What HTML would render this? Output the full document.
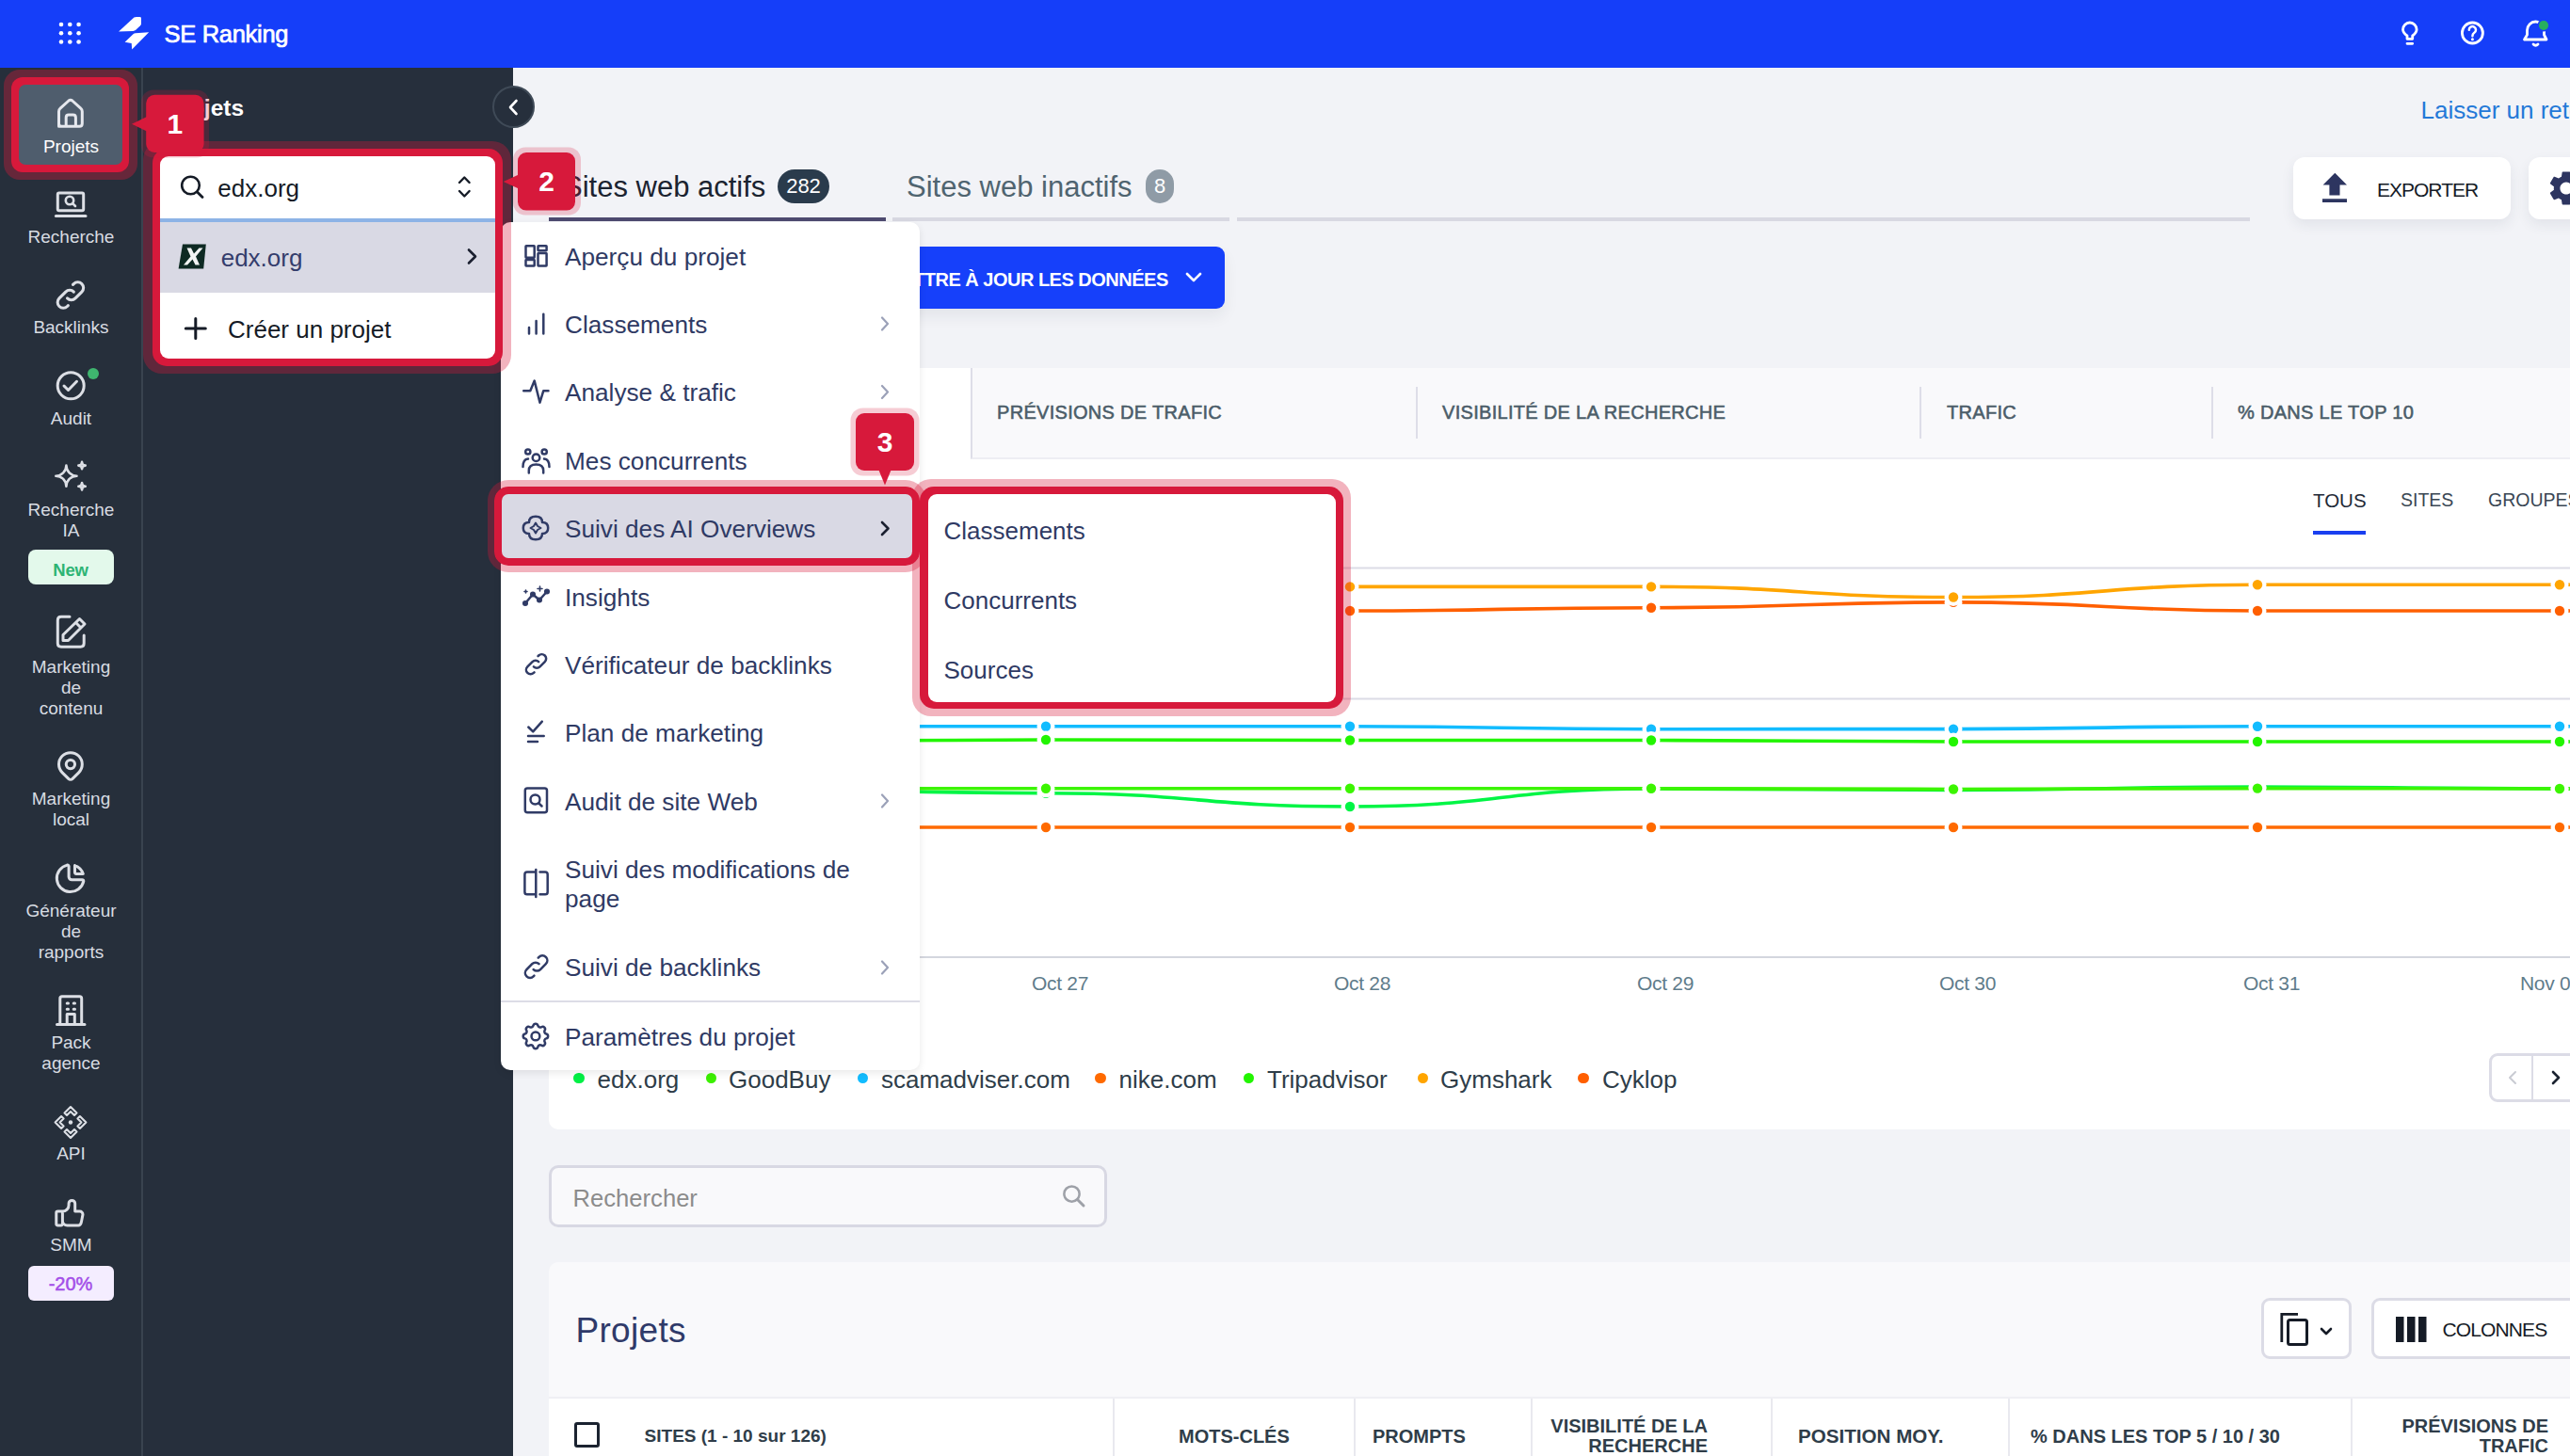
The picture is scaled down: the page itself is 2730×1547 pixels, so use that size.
<!DOCTYPE html>
<html><head><meta charset="utf-8">
<style>
*{box-sizing:border-box;margin:0;padding:0}
html,body{width:2730px;height:1547px;overflow:hidden;background:#f2f3f7;font-family:"Liberation Sans",sans-serif}
.a{position:absolute}
.t{position:absolute;white-space:nowrap;line-height:1}
svg{position:absolute;overflow:visible}
.m{top:428px;font-size:20px;font-weight:400;color:#4b5d69;letter-spacing:0.3px;-webkit-text-stroke:0.55px #4b5d69}
.th{font-size:20px;font-weight:700;color:#2f3d49;white-space:nowrap}
.mi{left:600px;font-size:26.2px;color:#2f3a64}
.sm{left:1002.5px;font-size:26px;color:#2f3a64}
.bn{font-size:30px;font-weight:700;color:#fff;text-align:center}
.sl{position:absolute;left:0;width:151px;text-align:center;font-size:19px;line-height:22px;color:#d8dce2}
</style></head><body>

<!-- TOP BAR -->
<div class="a" style="left:0;top:0;width:2730px;height:72px;background:#153ef9"></div>
<svg style="left:0;top:0" width="2730" height="72" viewBox="0 0 2730 72">
 <g fill="#fff">
  <circle cx="65" cy="26" r="2.3"/><circle cx="74.3" cy="26" r="2.3"/><circle cx="83.6" cy="26" r="2.3"/>
  <circle cx="65" cy="35.3" r="2.3"/><circle cx="74.3" cy="35.3" r="2.3"/><circle cx="83.6" cy="35.3" r="2.3"/>
  <circle cx="65" cy="44.5" r="2.3"/><circle cx="74.3" cy="44.5" r="2.3"/><circle cx="83.6" cy="44.5" r="2.3"/>
  <path d="M126.1 33.5 L142.4 18.6 Q143.6 17.9 145 17.9 L148.9 17.9 Q150 18 150 19.5 L150 25.5 Q150 26.3 149 27.3 L144 32 Q143 32.8 141.5 32.9 Z"/>
  <path d="M132.6 44.8 L141.5 36.3 Q142.5 35.4 144 35.2 L158.2 34.2 L140.2 52.4 L139.7 45.9 Z"/>
 </g>
</svg>
<div class="t" style="left:174.5px;top:24px;font-size:25.5px;font-weight:400;letter-spacing:-0.3px;-webkit-text-stroke:0.7px #fff;color:#fff">SE Ranking</div>

<svg style="left:0;top:0" width="2730" height="72" fill="none" stroke="#fff" stroke-width="2.8" stroke-linecap="round" stroke-linejoin="round">
  <path d="M2557 41.3 V38 Q2552.5 35 2552.5 31.3 A7.3 7.3 0 0 1 2567.1 31.3 Q2567.1 35 2562.7 38 V41.3 Z M2557 46.3 H2562.7"/>
  <circle cx="2626.4" cy="35" r="11"/>
  <path d="M2622.8 31.8 A3.6 3.6 0 1 1 2628.3 34.8 Q2626.4 36 2626.4 38.3" stroke-width="2.5"/>
  <circle cx="2626.4" cy="41.8" r="1.5" fill="#fff" stroke="none"/>
  <path d="M2681.5 42 H2705 L2702.5 37 V32 A9 9 0 0 0 2684.5 32 V37 Z M2691 47 Q2693.5 49.5 2696 47"/>
</svg>
<div class="a" style="left:2697px;top:22px;width:9.5px;height:9.5px;border-radius:50%;background:#27ae60;box-shadow:0 0 0 1.5px #153ef9"></div>

<!-- LEFT SIDEBAR -->
<div class="a" style="left:0;top:72px;width:151px;height:1475px;background:#262f3b"></div>
<div class="a" style="left:150px;top:72px;width:2px;height:1475px;background:#39434f"></div>

<!-- sidebar active -->
<div class="a" style="left:4px;top:74px;width:142px;height:117px;border-radius:17px;background:rgba(215,25,59,0.36)"></div>
<div class="a" style="left:12px;top:82px;width:125px;height:101px;border-radius:12px;background:#d7193b"></div>
<div class="a" style="left:20px;top:90px;width:110px;height:85px;border-radius:7px;background:#4f5d6d"></div>
<svg style="left:0;top:0" width="151" height="1547" viewBox="0 0 151 1547" fill="none" stroke="#dcdfe5" stroke-width="3" stroke-linecap="round" stroke-linejoin="round">
 <!-- home -->
 <path stroke="#e6e8ee" d="M62.5 134.2 V118.5 Q62.5 116.5 64 115.2 L73 107 Q74.9 105.5 76.8 107 L85.8 115.2 Q87.3 116.5 87.3 118.5 V131.2 Q87.3 134.2 84.3 134.2 H65.5 Q62.5 134.2 62.5 131.2 Z M70.2 134.2 V125 Q70.2 122.1 73 122.1 H77.6 Q80.4 122.1 80.4 125 V134.2"/>
 <!-- recherche monitor -->
 <rect x="61.3" y="205" width="27.4" height="18.7" rx="1.5"/>
 <path d="M59.4 229.4 H91"/>
 <circle cx="74" cy="213" r="4.2" stroke-width="2.6"/><path d="M77.2 216.2 L80 219" stroke-width="2.6"/>
 <!-- link -->
 <g transform="translate(54.4,293) scale(1.71)" stroke-width="1.8"><path d="M10 14a3.5 3.5 0 0 0 5 0l4 -4a3.5 3.5 0 0 0 -5 -5l-.5 .5"/><path d="M14 10a3.5 3.5 0 0 0 -5 0l-4 4a3.5 3.5 0 0 0 5 5l.5 -.5"/></g>
 <!-- audit -->
 <circle cx="75.2" cy="409.8" r="14"/><path d="M68 410 L72.5 414.5 L81.5 405.3"/>
 <!-- sparkles -->
 <g transform="translate(53.75,483.5) scale(1.85)" stroke-width="1.4"><path d="M16 18a2 2 0 0 1 2 2a2 2 0 0 1 2 -2a2 2 0 0 1 -2 -2a2 2 0 0 1 -2 2zm0 -12a2 2 0 0 1 2 2a2 2 0 0 1 2 -2a2 2 0 0 1 -2 -2a2 2 0 0 1 -2 2zm-7 12a6 6 0 0 1 6 -6a6 6 0 0 1 -6 -6a6 6 0 0 1 -6 6a6 6 0 0 1 6 6z"/></g>
 <!-- edit -->
 <path d="M74 655.3 H65 Q61.3 655.3 61.3 659 V683.5 Q61.3 687.2 65 687.2 H85.5 Q89.2 687.2 89.2 683.5 V675"/>
 <path d="M67 674.5 L84.5 657.5 L90 663 L72.5 680.5 H67 Z M80.5 661.5 L86 667"/>
 <!-- pin -->
 <g transform="translate(56.3,795) scale(1.55)" stroke-width="1.95"><path d="M9 11a3 3 0 1 0 6 0a3 3 0 0 0 -6 0"/><path d="M17.657 16.657l-4.243 4.243a2 2 0 0 1 -2.827 0l-4.244 -4.243a8 8 0 1 1 11.314 0z"/></g>
 <!-- pie -->
 <g transform="translate(55.5,914) scale(1.6)" stroke-width="1.9"><path d="M10 3.2a9 9 0 1 0 10.8 10.8a1 1 0 0 0 -1 -1h-6.8a2 2 0 0 1 -2 -2v-7a.9 .9 0 0 0 -1 -.8"/><path d="M15 3.5a9 9 0 0 1 5.5 5.5h-4.5a1 1 0 0 1 -1 -1v-4.5"/></g>
 <!-- building -->
 <path d="M60.5 1088.5 H90 M63.8 1088.5 V1061 Q63.8 1058.8 66 1058.8 H84.5 Q86.7 1058.8 86.7 1061 V1088.5 M71.2 1066 h1.3 M78.2 1066 h1.3 M71.2 1072.2 h1.3 M78.2 1072.2 h1.3 M71.2 1088.5 V1077.5 H79.3 V1088.5"/>
 <!-- api -->
 <g stroke-width="2.1"><path d="M75 1176 L81.5 1182.5 L79 1185 L75 1181 L71 1185 L68.5 1182.5 Z M75 1209 L81.5 1202.5 L79 1200 L75 1204 L71 1200 L68.5 1202.5 Z M58.6 1192.5 L65.1 1186 L67.6 1188.5 L63.6 1192.5 L67.6 1196.5 L65.1 1199 Z M91.4 1192.5 L84.9 1186 L82.4 1188.5 L86.4 1192.5 L82.4 1196.5 L84.9 1199 Z"/></g>
 <circle cx="75" cy="1192.5" r="2.2" fill="#dcdfe5" stroke="none"/>
 <!-- thumb -->
 <g transform="translate(54.8,1268.8) scale(1.66)" stroke-width="1.8"><path d="M7 11v8a1 1 0 0 1 -1 1h-2a1 1 0 0 1 -1 -1v-7a1 1 0 0 1 1 -1h3a4 4 0 0 0 4 -4v-1a2 2 0 0 1 4 0v5h3a2 2 0 0 1 2 2l-1 5a2 3 0 0 1 -2 2h-7a3 3 0 0 1 -3 -3"/></g>
</svg>
<div class="a" style="left:93px;top:391px;width:12px;height:12px;border-radius:50%;background:#3fb56f"></div>
<div class="sl" style="top:144.5px;color:#fff">Projets</div>
<div class="sl" style="top:241px">Recherche</div>
<div class="sl" style="top:337px">Backlinks</div>
<div class="sl" style="top:434px">Audit</div>
<div class="sl" style="top:530.5px">Recherche<br>IA</div>
<div class="a" style="left:29.5px;top:584px;width:91px;height:37px;border-radius:8px;background:#e3f9eb"></div><div class="t" style="left:29.5px;width:91px;text-align:center;top:596.5px;font-size:18.5px;font-weight:700;letter-spacing:-0.2px;color:#2db474">New</div>
<div class="sl" style="top:697.5px">Marketing<br>de<br>contenu</div>
<div class="sl" style="top:838px">Marketing<br>local</div>
<div class="sl" style="top:957px">Générateur<br>de<br>rapports</div>
<div class="sl" style="top:1097px">Pack<br>agence</div>
<div class="sl" style="top:1215px">API</div>
<div class="sl" style="top:1312px">SMM</div>
<div class="a" style="left:29.5px;top:1345px;width:91px;height:37px;border-radius:6px;background:#f4edff;color:#a34ee8;font-size:20px;font-weight:400;-webkit-text-stroke:0.5px #a34ee8;text-align:center;line-height:38px">-20%</div>

<!-- PROJECT PANEL -->
<div class="a" style="left:152px;top:72px;width:393px;height:1475px;background:#262f3c"></div>


<!-- MAIN CONTENT -->
<div class="t" style="left:2571.5px;top:104px;font-size:26px;color:#2479d8">Laisser un retour</div>
<!-- tabs -->
<div class="t" style="left:598px;top:183px;font-size:31px;color:#1b2330">Sites web actifs</div>
<div class="a" style="left:826px;top:180px;width:55px;height:36px;border-radius:18px;background:#2a3b4c;color:#fff;font-size:22px;line-height:36px;text-align:center">282</div>
<div class="t" style="left:963px;top:183px;font-size:31px;color:#4f6470">Sites web inactifs</div>
<div class="a" style="left:1217px;top:180px;width:30px;height:36px;border-radius:15px;background:#8f9ba6;color:#fff;font-size:22px;line-height:36px;text-align:center">8</div>
<div class="a" style="left:583px;top:231px;width:358px;height:4px;background:#4e4a70"></div>
<div class="a" style="left:948px;top:231px;width:358px;height:4px;background:#d8d8e2"></div>
<div class="a" style="left:1314px;top:231px;width:1076px;height:4px;background:#d8d8e2"></div>
<!-- export -->
<div class="a" style="left:2436px;top:167px;width:231px;height:66px;border-radius:12px;background:#fff;box-shadow:0 6px 14px rgba(40,50,80,0.08)"></div>
<svg style="left:0;top:0" width="2730" height="300">
 <path fill="#2d3560" d="M2480.3 183.8 L2493 196.4 H2485.5 V207.6 H2474.4 V196.4 H2467.6 Z M2467 211.3 H2493 V215 H2467 Z"/>
</svg>
<div class="t" style="left:2525px;top:190.5px;font-size:21px;letter-spacing:-1px;color:#151b26">EXPORTER</div>
<div class="a" style="left:2686px;top:167px;width:120px;height:66px;border-radius:12px;background:#fff;box-shadow:0 6px 14px rgba(40,50,80,0.08)"></div>
<svg style="left:2704px;top:178px" width="44" height="44" viewBox="0 0 24 24"><path fill="#2d3560" d="M19.14 12.94c.04-.3.06-.61.06-.94 0-.32-.02-.64-.07-.94l2.03-1.58c.18-.14.23-.41.12-.61l-1.92-3.32c-.12-.22-.37-.29-.59-.22l-2.39.96c-.5-.38-1.03-.7-1.62-.94l-.36-2.54c-.04-.24-.24-.41-.48-.41h-3.84c-.24 0-.43.17-.47.41l-.36 2.54c-.59.24-1.13.57-1.62.94l-2.39-.96c-.22-.08-.47 0-.59.22L2.74 8.87c-.12.21-.08.47.12.61l2.03 1.58c-.05.3-.09.63-.09.94s.02.64.07.94l-2.03 1.58c-.18.14-.23.41-.12.61l1.92 3.32c.12.22.37.29.59.22l2.39-.96c.5.38 1.03.7 1.62.94l.36 2.54c.05.24.24.41.48.41h3.84c.24 0 .44-.17.47-.41l.36-2.54c.59-.24 1.13-.56 1.62-.94l2.39.96c.22.08.47 0 .59-.22l1.92-3.32c.12-.22.07-.47-.12-.61l-2.01-1.58zM12 15.6c-1.98 0-3.6-1.62-3.6-3.6s1.62-3.6 3.6-3.6 3.6 1.62 3.6 3.6-1.62 3.6-3.6 3.6z"/></svg>
<!-- blue update button -->
<div class="a" style="left:700px;top:261.5px;width:601px;height:66px;border-radius:9px;background:#1640fa;box-shadow:0 8px 16px rgba(30,40,60,0.07)"></div>
<div class="t" style="left:941px;top:287px;font-size:20px;font-weight:700;letter-spacing:-0.5px;color:#fff">METTRE À JOUR LES DONNÉES</div>
<svg style="left:1258px;top:288px" width="20" height="14"><path d="M3 3 L10 10 L17 3" fill="none" stroke="#fff" stroke-width="2.6" stroke-linecap="round" stroke-linejoin="round"/></svg>

<!-- chart card -->
<div class="a" style="left:583px;top:391px;width:2200px;height:809px;border-radius:10px;background:#fff"></div>
<div class="a" style="left:1031px;top:391px;width:1750px;height:97px;background:#f9f9fb;border-left:2px solid #dedee8;border-bottom:2px solid #eeeef3"></div>
<div class="a" style="left:1504px;top:411px;width:2px;height:55px;background:#dedee8"></div>
<div class="a" style="left:2039px;top:411px;width:2px;height:55px;background:#dedee8"></div>
<div class="a" style="left:2349px;top:411px;width:2px;height:55px;background:#dedee8"></div>
<div class="t m" style="left:1059px">PRÉVISIONS DE TRAFIC</div>
<div class="t m" style="left:1532px">VISIBILITÉ DE LA RECHERCHE</div>
<div class="t m" style="left:2068px">TRAFIC</div>
<div class="t m" style="left:2377px">% DANS LE TOP 10</div>
<div class="t" style="left:2457px;top:522px;font-size:20.5px;color:#1f2937">TOUS</div>
<div class="t" style="left:2550px;top:522px;font-size:19.5px;color:#3a4754">SITES</div>
<div class="t" style="left:2643px;top:522px;font-size:19.5px;color:#3a4754">GROUPES</div>
<div class="a" style="left:2457px;top:564px;width:56px;height:4px;background:#1a3ff0"></div>

<svg style="left:0;top:0" width="2730" height="1100" viewBox="0 0 2730 1100">
<g stroke="#dcdce6" stroke-width="2"><path d="M583 603.5 H2730 M583 742.5 H2730"/></g>
<path d="M583 1017 H2730" stroke="#d4d6de" stroke-width="2"/>
<path d="M789 649 C950.0 649 950.0 649 1111 649 C1272.5 649 1272.5 649 1434 649 C1594.0 649 1594.0 645.7 1754 645.7 C1914.5 645.7 1914.5 639.9 2075 639.9 C2236.5 639.9 2236.5 649 2398 649 C2558.5 649 2558.5 649 2719 649 C2879.5 649 2879.5 649 3040 649" fill="none" stroke="#ff5f00" stroke-width="3.6"/>
<path d="M789 623 C950.0 623 950.0 623 1111 623 C1272.5 623 1272.5 623.4 1434 623.4 C1594.0 623.4 1594.0 623.4 1754 623.4 C1914.5 623.4 1914.5 634.5 2075 634.5 C2236.5 634.5 2236.5 621.3 2398 621.3 C2558.5 621.3 2558.5 621.3 2719 621.3 C2879.5 621.3 2879.5 621.3 3040 621.3" fill="none" stroke="#ffa500" stroke-width="3.6"/>
<path d="M789 771.8 C950.0 771.8 950.0 771.8 1111 771.8 C1272.5 771.8 1272.5 771.8 1434 771.8 C1594.0 771.8 1594.0 774.7 1754 774.7 C1914.5 774.7 1914.5 774.6 2075 774.6 C2236.5 774.6 2236.5 771.7 2398 771.7 C2558.5 771.7 2558.5 771.7 2719 771.7 C2879.5 771.7 2879.5 771.7 3040 771.7" fill="none" stroke="#12bcff" stroke-width="3.6"/>
<path d="M789 787.5 C950.0 787.5 950.0 786 1111 786 C1272.5 786 1272.5 786.5 1434 786.5 C1594.0 786.5 1594.0 786.5 1754 786.5 C1914.5 786.5 1914.5 788 2075 788 C2236.5 788 2236.5 788 2398 788 C2558.5 788 2558.5 788 2719 788 C2879.5 788 2879.5 788 3040 788" fill="none" stroke="#22f500" stroke-width="3.6"/>
<path d="M789 838 C950.0 838 950.0 842.7 1111 842.7 C1272.5 842.7 1272.5 857 1434 857 C1594.0 857 1594.0 838 1754 838 C1914.5 838 1914.5 839.5 2075 839.5 C2236.5 839.5 2236.5 836 2398 836 C2558.5 836 2558.5 838 2719 838 C2879.5 838 2879.5 838 3040 838" fill="none" stroke="#00f545" stroke-width="3.6"/>
<path d="M789 837.8 C950.0 837.8 950.0 837.8 1111 837.8 C1272.5 837.8 1272.5 837.8 1434 837.8 C1594.0 837.8 1594.0 837.8 1754 837.8 C1914.5 837.8 1914.5 838.5 2075 838.5 C2236.5 838.5 2236.5 837.6 2398 837.6 C2558.5 837.6 2558.5 838 2719 838 C2879.5 838 2879.5 838 3040 838" fill="none" stroke="#3cf500" stroke-width="3.6"/>
<path d="M789 879 C950.0 879 950.0 879 1111 879 C1272.5 879 1272.5 879 1434 879 C1594.0 879 1594.0 879 1754 879 C1914.5 879 1914.5 879 2075 879 C2236.5 879 2236.5 879 2398 879 C2558.5 879 2558.5 879 2719 879 C2879.5 879 2879.5 879 3040 879" fill="none" stroke="#ff6a00" stroke-width="3.6"/>
<circle cx="789" cy="649" r="9.5" fill="#fff"/>
<circle cx="1111" cy="649" r="9.5" fill="#fff"/>
<circle cx="1434" cy="649" r="9.5" fill="#fff"/>
<circle cx="1754" cy="645.7" r="9.5" fill="#fff"/>
<circle cx="2075" cy="639.9" r="9.5" fill="#fff"/>
<circle cx="2398" cy="649" r="9.5" fill="#fff"/>
<circle cx="2719" cy="649" r="9.5" fill="#fff"/>
<circle cx="3040" cy="649" r="9.5" fill="#fff"/>
<circle cx="789" cy="649" r="5.2" fill="#ff5f00"/>
<circle cx="1111" cy="649" r="5.2" fill="#ff5f00"/>
<circle cx="1434" cy="649" r="5.2" fill="#ff5f00"/>
<circle cx="1754" cy="645.7" r="5.2" fill="#ff5f00"/>
<circle cx="2075" cy="639.9" r="5.2" fill="#ff5f00"/>
<circle cx="2398" cy="649" r="5.2" fill="#ff5f00"/>
<circle cx="2719" cy="649" r="5.2" fill="#ff5f00"/>
<circle cx="3040" cy="649" r="5.2" fill="#ff5f00"/>
<circle cx="789" cy="623" r="9.5" fill="#fff"/>
<circle cx="1111" cy="623" r="9.5" fill="#fff"/>
<circle cx="1434" cy="623.4" r="9.5" fill="#fff"/>
<circle cx="1754" cy="623.4" r="9.5" fill="#fff"/>
<circle cx="2075" cy="634.5" r="9.5" fill="#fff"/>
<circle cx="2398" cy="621.3" r="9.5" fill="#fff"/>
<circle cx="2719" cy="621.3" r="9.5" fill="#fff"/>
<circle cx="3040" cy="621.3" r="9.5" fill="#fff"/>
<circle cx="789" cy="623" r="5.2" fill="#ffa500"/>
<circle cx="1111" cy="623" r="5.2" fill="#ffa500"/>
<circle cx="1434" cy="623.4" r="5.2" fill="#ffa500"/>
<circle cx="1754" cy="623.4" r="5.2" fill="#ffa500"/>
<circle cx="2075" cy="634.5" r="5.2" fill="#ffa500"/>
<circle cx="2398" cy="621.3" r="5.2" fill="#ffa500"/>
<circle cx="2719" cy="621.3" r="5.2" fill="#ffa500"/>
<circle cx="3040" cy="621.3" r="5.2" fill="#ffa500"/>
<circle cx="789" cy="771.8" r="9.5" fill="#fff"/>
<circle cx="1111" cy="771.8" r="9.5" fill="#fff"/>
<circle cx="1434" cy="771.8" r="9.5" fill="#fff"/>
<circle cx="1754" cy="774.7" r="9.5" fill="#fff"/>
<circle cx="2075" cy="774.6" r="9.5" fill="#fff"/>
<circle cx="2398" cy="771.7" r="9.5" fill="#fff"/>
<circle cx="2719" cy="771.7" r="9.5" fill="#fff"/>
<circle cx="3040" cy="771.7" r="9.5" fill="#fff"/>
<circle cx="789" cy="771.8" r="5.2" fill="#12bcff"/>
<circle cx="1111" cy="771.8" r="5.2" fill="#12bcff"/>
<circle cx="1434" cy="771.8" r="5.2" fill="#12bcff"/>
<circle cx="1754" cy="774.7" r="5.2" fill="#12bcff"/>
<circle cx="2075" cy="774.6" r="5.2" fill="#12bcff"/>
<circle cx="2398" cy="771.7" r="5.2" fill="#12bcff"/>
<circle cx="2719" cy="771.7" r="5.2" fill="#12bcff"/>
<circle cx="3040" cy="771.7" r="5.2" fill="#12bcff"/>
<circle cx="789" cy="787.5" r="9.5" fill="#fff"/>
<circle cx="1111" cy="786" r="9.5" fill="#fff"/>
<circle cx="1434" cy="786.5" r="9.5" fill="#fff"/>
<circle cx="1754" cy="786.5" r="9.5" fill="#fff"/>
<circle cx="2075" cy="788" r="9.5" fill="#fff"/>
<circle cx="2398" cy="788" r="9.5" fill="#fff"/>
<circle cx="2719" cy="788" r="9.5" fill="#fff"/>
<circle cx="3040" cy="788" r="9.5" fill="#fff"/>
<circle cx="789" cy="787.5" r="5.2" fill="#22f500"/>
<circle cx="1111" cy="786" r="5.2" fill="#22f500"/>
<circle cx="1434" cy="786.5" r="5.2" fill="#22f500"/>
<circle cx="1754" cy="786.5" r="5.2" fill="#22f500"/>
<circle cx="2075" cy="788" r="5.2" fill="#22f500"/>
<circle cx="2398" cy="788" r="5.2" fill="#22f500"/>
<circle cx="2719" cy="788" r="5.2" fill="#22f500"/>
<circle cx="3040" cy="788" r="5.2" fill="#22f500"/>
<circle cx="789" cy="838" r="9.5" fill="#fff"/>
<circle cx="1111" cy="842.7" r="9.5" fill="#fff"/>
<circle cx="1434" cy="857" r="9.5" fill="#fff"/>
<circle cx="1754" cy="838" r="9.5" fill="#fff"/>
<circle cx="2075" cy="839.5" r="9.5" fill="#fff"/>
<circle cx="2398" cy="836" r="9.5" fill="#fff"/>
<circle cx="2719" cy="838" r="9.5" fill="#fff"/>
<circle cx="3040" cy="838" r="9.5" fill="#fff"/>
<circle cx="789" cy="838" r="5.2" fill="#00f545"/>
<circle cx="1111" cy="842.7" r="5.2" fill="#00f545"/>
<circle cx="1434" cy="857" r="5.2" fill="#00f545"/>
<circle cx="1754" cy="838" r="5.2" fill="#00f545"/>
<circle cx="2075" cy="839.5" r="5.2" fill="#00f545"/>
<circle cx="2398" cy="836" r="5.2" fill="#00f545"/>
<circle cx="2719" cy="838" r="5.2" fill="#00f545"/>
<circle cx="3040" cy="838" r="5.2" fill="#00f545"/>
<circle cx="789" cy="837.8" r="9.5" fill="#fff"/>
<circle cx="1111" cy="837.8" r="9.5" fill="#fff"/>
<circle cx="1434" cy="837.8" r="9.5" fill="#fff"/>
<circle cx="1754" cy="837.8" r="9.5" fill="#fff"/>
<circle cx="2075" cy="838.5" r="9.5" fill="#fff"/>
<circle cx="2398" cy="837.6" r="9.5" fill="#fff"/>
<circle cx="2719" cy="838" r="9.5" fill="#fff"/>
<circle cx="3040" cy="838" r="9.5" fill="#fff"/>
<circle cx="789" cy="837.8" r="5.2" fill="#3cf500"/>
<circle cx="1111" cy="837.8" r="5.2" fill="#3cf500"/>
<circle cx="1434" cy="837.8" r="5.2" fill="#3cf500"/>
<circle cx="1754" cy="837.8" r="5.2" fill="#3cf500"/>
<circle cx="2075" cy="838.5" r="5.2" fill="#3cf500"/>
<circle cx="2398" cy="837.6" r="5.2" fill="#3cf500"/>
<circle cx="2719" cy="838" r="5.2" fill="#3cf500"/>
<circle cx="3040" cy="838" r="5.2" fill="#3cf500"/>
<circle cx="789" cy="879" r="9.5" fill="#fff"/>
<circle cx="1111" cy="879" r="9.5" fill="#fff"/>
<circle cx="1434" cy="879" r="9.5" fill="#fff"/>
<circle cx="1754" cy="879" r="9.5" fill="#fff"/>
<circle cx="2075" cy="879" r="9.5" fill="#fff"/>
<circle cx="2398" cy="879" r="9.5" fill="#fff"/>
<circle cx="2719" cy="879" r="9.5" fill="#fff"/>
<circle cx="3040" cy="879" r="9.5" fill="#fff"/>
<circle cx="789" cy="879" r="5.2" fill="#ff6a00"/>
<circle cx="1111" cy="879" r="5.2" fill="#ff6a00"/>
<circle cx="1434" cy="879" r="5.2" fill="#ff6a00"/>
<circle cx="1754" cy="879" r="5.2" fill="#ff6a00"/>
<circle cx="2075" cy="879" r="5.2" fill="#ff6a00"/>
<circle cx="2398" cy="879" r="5.2" fill="#ff6a00"/>
<circle cx="2719" cy="879" r="5.2" fill="#ff6a00"/>
<circle cx="3040" cy="879" r="5.2" fill="#ff6a00"/>
</svg>
<div class="t" style="left:805px;top:1034px;font-size:21px;letter-spacing:-0.3px;color:#5f7c8b">Oct 26</div>
<div class="t" style="left:1096px;top:1034px;font-size:21px;letter-spacing:-0.3px;color:#5f7c8b">Oct 27</div>
<div class="t" style="left:1417px;top:1034px;font-size:21px;letter-spacing:-0.3px;color:#5f7c8b">Oct 28</div>
<div class="t" style="left:1739px;top:1034px;font-size:21px;letter-spacing:-0.3px;color:#5f7c8b">Oct 29</div>
<div class="t" style="left:2060px;top:1034px;font-size:21px;letter-spacing:-0.3px;color:#5f7c8b">Oct 30</div>
<div class="t" style="left:2383px;top:1034px;font-size:21px;letter-spacing:-0.3px;color:#5f7c8b">Oct 31</div>
<div class="t" style="left:2677px;top:1034px;font-size:21px;letter-spacing:-0.3px;color:#5f7c8b">Nov 01</div>
<div class="a" style="left:609.4px;top:1139.7px;width:11.2px;height:11.2px;border-radius:50%;background:#00f045"></div>
<div class="t" style="left:634.6px;top:1134px;font-size:26px;color:#2e3d49">edx.org</div>
<div class="a" style="left:750.1px;top:1139.7px;width:11.2px;height:11.2px;border-radius:50%;background:#3cf000"></div>
<div class="t" style="left:774px;top:1134px;font-size:26px;color:#2e3d49">GoodBuy</div>
<div class="a" style="left:910.9px;top:1139.7px;width:11.2px;height:11.2px;border-radius:50%;background:#12bcff"></div>
<div class="t" style="left:936px;top:1134px;font-size:26px;color:#2e3d49">scamadviser.com</div>
<div class="a" style="left:1163.4px;top:1139.7px;width:11.2px;height:11.2px;border-radius:50%;background:#ff6a00"></div>
<div class="t" style="left:1188.6px;top:1134px;font-size:26px;color:#2e3d49">nike.com</div>
<div class="a" style="left:1321.2px;top:1139.7px;width:11.2px;height:11.2px;border-radius:50%;background:#22f500"></div>
<div class="t" style="left:1346px;top:1134px;font-size:26px;color:#2e3d49">Tripadvisor</div>
<div class="a" style="left:1506.0px;top:1139.7px;width:11.2px;height:11.2px;border-radius:50%;background:#ffa500"></div>
<div class="t" style="left:1530px;top:1134px;font-size:26px;color:#2e3d49">Gymshark</div>
<div class="a" style="left:1676.4px;top:1139.7px;width:11.2px;height:11.2px;border-radius:50%;background:#ff5f00"></div>
<div class="t" style="left:1702px;top:1134px;font-size:26px;color:#2e3d49">Cyklop</div>

<!-- pagination -->
<div class="a" style="left:2644px;top:1119px;width:120px;height:52px;border:3px solid #dcdce6;border-radius:9px;background:#fff"></div>
<div class="a" style="left:2689px;top:1121px;width:2px;height:48px;background:#dcdce6"></div>
<svg style="left:2660px;top:1135px" width="20" height="20"><path d="M12 4 L6 10 L12 16" fill="none" stroke="#c9cbd3" stroke-width="2" stroke-linecap="round" stroke-linejoin="round"/></svg>
<svg style="left:2705px;top:1135px" width="20" height="20"><path d="M7 4 L13 10 L7 16" fill="none" stroke="#1b2330" stroke-width="2.6" stroke-linecap="round" stroke-linejoin="round"/></svg>
<!-- search -->
<div class="a" style="left:583px;top:1238px;width:593px;height:66px;border:3px solid #d8d8e3;border-radius:10px;background:#f9f9fb"></div>
<div class="t" style="left:608.6px;top:1260.5px;font-size:25.6px;color:#8c8c8c">Rechercher</div>
<svg style="left:1126px;top:1256px" width="30" height="30" viewBox="0 0 24 24"><circle cx="10" cy="10" r="6.5" fill="none" stroke="#9ea1a8" stroke-width="2"/><path d="M15 15 L20 20" stroke="#9ea1a8" stroke-width="2.4" stroke-linecap="round"/></svg>
<!-- projects card -->
<div class="a" style="left:583px;top:1341px;width:2200px;height:300px;border-radius:10px;background:#f9f9fb"></div>
<div class="t" style="left:611.5px;top:1395px;font-size:37px;letter-spacing:0.3px;color:#2f3a69">Projets</div>
<div class="a" style="left:2402px;top:1379px;width:96px;height:65px;border:3px solid #dcdce6;border-radius:9px;background:#fff"></div>
<svg style="left:2420px;top:1393px" width="60" height="40"><path d="M3.8 33 V3.3 H21" fill="none" stroke="#151b26" stroke-width="2.8"/><rect x="10.5" y="9.5" width="20" height="26" rx="2" fill="none" stroke="#151b26" stroke-width="3"/><path d="M46 19 L51 24 L56 19" fill="none" stroke="#151b26" stroke-width="2.6" stroke-linecap="round" stroke-linejoin="round"/></svg>
<div class="a" style="left:2519px;top:1379px;width:300px;height:65px;border:3px solid #dcdce6;border-radius:9px;background:#fff"></div>
<svg style="left:2545px;top:1398px" width="36" height="30"><rect x="0" y="1" width="8.5" height="27" fill="#151b26"/><rect x="12" y="1" width="8.5" height="27" fill="#151b26"/><rect x="24" y="1" width="8.5" height="27" fill="#151b26"/></svg>
<div class="t" style="left:2594.6px;top:1402px;font-size:21px;letter-spacing:-0.9px;color:#151b26">COLONNES</div>
<!-- table header -->
<div class="a" style="left:583px;top:1484px;width:2200px;height:70px;background:#fff;border-top:2px solid #efeff4"></div>
<div class="a" style="left:1182px;top:1486px;width:2px;height:70px;background:#e9e9ef"></div>
<div class="a" style="left:1438px;top:1486px;width:2px;height:70px;background:#e9e9ef"></div>
<div class="a" style="left:1626px;top:1486px;width:2px;height:70px;background:#e9e9ef"></div>
<div class="a" style="left:1881px;top:1486px;width:2px;height:70px;background:#e9e9ef"></div>
<div class="a" style="left:2133px;top:1486px;width:2px;height:70px;background:#e9e9ef"></div>
<div class="a" style="left:2497px;top:1486px;width:2px;height:70px;background:#e9e9ef"></div>
<div class="a" style="left:610px;top:1511px;width:27px;height:27px;border:3px solid #1b2330;border-radius:3px;background:#fff"></div>
<div class="t th" style="left:684.6px;top:1516px;font-size:19px">SITES (1 - 10 sur 126)</div>
<div class="t th" style="left:1252px;top:1516px">MOTS-CLÉS</div>
<div class="t th" style="left:1458px;top:1516px">PROMPTS</div>
<div class="th a" style="left:1600px;top:1505px;width:214px;text-align:right;line-height:21px">VISIBILITÉ DE LA<br>RECHERCHE</div>
<div class="t th" style="left:1910px;top:1516px;font-size:20.6px">POSITION MOY.</div>
<div class="t th" style="left:2157px;top:1516px">% DANS LES TOP 5 / 10 / 30</div>
<div class="th a" style="left:2450px;top:1505px;width:257px;text-align:right;line-height:21px">PRÉVISIONS DE<br>TRAFIC</div>


<!-- ===== OVERLAYS ===== -->
<!-- panel title + collapse -->
<div class="t" style="left:176px;top:102.6px;font-size:24.5px;font-weight:700;color:#fff">Projets</div>
<div class="a" style="left:523px;top:91px;width:45px;height:45px;border-radius:50%;background:#262f3c;border:2px solid #3f4a57"></div>
<svg style="left:536px;top:103px" width="20" height="22"><path d="M12.5 4 L6 11 L12.5 18" fill="none" stroke="#fff" stroke-width="2.6" stroke-linecap="round" stroke-linejoin="round"/></svg>

<!-- main menu -->
<div class="a" style="left:532px;top:236px;width:445px;height:900.6px;border-radius:10px;background:#fff;box-shadow:0 3px 8px rgba(0,0,0,0.09)"></div>
<div class="a" style="left:532px;top:525px;width:437px;height:67.6px;background:#d9d9e4"></div>
<div class="a" style="left:532px;top:1063px;width:445px;height:2px;background:#dcdce6"></div>
<div class="t mi" style="top:260px">Aperçu du projet</div>
<div class="t mi" style="top:331.5px">Classements</div>
<div class="t mi" style="top:404px">Analyse &amp; trafic</div>
<div class="t mi" style="top:476.6px">Mes concurrents</div>
<div class="t mi" style="top:549px">Suivi des AI Overviews</div>
<div class="t mi" style="top:621.7px">Insights</div>
<div class="t mi" style="top:693.6px">Vérificateur de backlinks</div>
<div class="t mi" style="top:766px">Plan de marketing</div>
<div class="t mi" style="top:838.7px">Audit de site Web</div>
<div class="a mi" style="top:909px;line-height:31px;white-space:nowrap">Suivi des modifications de<br>page</div>
<div class="t mi" style="top:1014.7px">Suivi de backlinks</div>
<div class="t mi" style="top:1089px">Paramètres du projet</div>
<svg style="left:0;top:0" width="1000" height="1140" fill="none" stroke="#303b66" stroke-width="2.5" stroke-linecap="round" stroke-linejoin="round">
  <!-- apercu -->
  <rect x="558.5" y="261.3" width="9.2" height="12.5" rx="0.5"/><rect x="558.5" y="276" width="9.2" height="6.5" rx="0.5"/>
  <rect x="571.5" y="261.3" width="9.1" height="5" rx="0.5"/><rect x="571.5" y="269" width="9.1" height="13.5" rx="0.5"/>
  <!-- classements -->
  <path d="M562 348 V354.6 M569.6 341 V354.6 M577.3 333.8 V354.6"/>
  <!-- analyse -->
  <path d="M556.2 415.2 H563.3 L567.7 404.6 L573.5 427.7 L577.3 415.2 H582.5"/>
  <!-- users -->
  <circle cx="569.5" cy="486.3" r="3.8"/><circle cx="560.8" cy="480" r="2.6"/><circle cx="578.2" cy="480" r="2.6"/>
  <path d="M561.8 502.5 V500 Q561.8 493.5 569.5 493.5 Q577.2 493.5 577.2 500 V502.5 M555.5 496 Q555.5 488 561 487.5 M583.5 496 Q583.5 488 578 487.5"/>
  <!-- AI overview -->
  <path d="M569 548.8 Q576 548.8 576 555 Q582.2 555 582.2 561 Q582.2 567 576 567 Q576 573.3 569 573.3 Q562 573.3 562 567 Q555.8 567 555.8 561 Q555.8 555 562 555 Q562 548.8 569 548.8 Z"/>
  <path d="M569 555.5 L571 559 L574.5 561 L571 563 L569 566.5 L567 563 L563.5 561 L567 559 Z" stroke-width="2"/>
  <!-- insights -->
  <path d="M558 641 L566 631.5 L573 637.5 L581 628.5"/>
  <circle cx="558" cy="641" r="1.8" fill="#303b66"/><circle cx="566" cy="631.5" r="1.8" fill="#303b66"/><circle cx="573" cy="637.5" r="1.8" fill="#303b66"/><circle cx="581" cy="628.5" r="1.8" fill="#303b66"/>
  <path d="M573.5 623 v5 M571 625.5 h5 M558.5 627 v3 M557 628.5 h3" stroke-width="1.6"/>
  <!-- link verif -->
  <g transform="translate(553.7,689.9) scale(1.32)" stroke-width="1.9"><path d="M10 14a3.5 3.5 0 0 0 5 0l4 -4a3.5 3.5 0 0 0 -5 -5l-.5 .5"/><path d="M14 10a3.5 3.5 0 0 0 -5 0l-4 4a3.5 3.5 0 0 0 5 5l.5 -.5"/></g>
  <!-- plan -->
  <path d="M561.3 772.5 L566.2 777.3 L575.8 766.7 M561 782 H577.7 M561 788 H571"/>
  <!-- audit site -->
  <rect x="557.8" y="837.5" width="23.2" height="25.8" rx="2.5"/><circle cx="568.5" cy="849.5" r="5"/><path d="M572.3 853.3 L575.5 856.5"/>
  <!-- page changes -->
  <path d="M569.3 924 V953 M569.3 926.6 H560 Q557.4 926.6 557.4 929.2 V947.7 Q557.4 950.3 560 950.3 H569.3 M573.5 926.6 H579.1 Q581.7 926.6 581.7 929.2 V947.7 Q581.7 950.3 579.1 950.3 H573.5"/>
  <!-- link backlinks -->
  <g transform="translate(552.1,1009.6) scale(1.46)" stroke-width="1.75"><path d="M10 14a3.5 3.5 0 0 0 5 0l4 -4a3.5 3.5 0 0 0 -5 -5l-.5 .5"/><path d="M14 10a3.5 3.5 0 0 0 -5 0l-4 4a3.5 3.5 0 0 0 5 5l.5 -.5"/></g>
  <!-- gear -->
  <g transform="translate(551.3,1083.3) scale(1.47)" stroke-width="1.7"><path d="M10.325 4.317c.426 -1.756 2.924 -1.756 3.35 0a1.724 1.724 0 0 0 2.573 1.066c1.543 -.94 3.31 .826 2.37 2.37a1.724 1.724 0 0 0 1.065 2.572c1.756 .426 1.756 2.924 0 3.35a1.724 1.724 0 0 0 -1.066 2.573c.94 1.543 -.826 3.31 -2.37 2.37a1.724 1.724 0 0 0 -2.572 1.065c-.426 1.756 -2.924 1.756 -3.35 0a1.724 1.724 0 0 0 -2.573 -1.066c-1.543 .94 -3.31 -.826 -2.37 -2.37a1.724 1.724 0 0 0 -1.065 -2.572c-1.756 -.426 -1.756 -2.924 0 -3.35a1.724 1.724 0 0 0 1.066 -2.573c-.94 -1.543 .826 -3.31 2.37 -2.37c1 .608 2.296 .07 2.572 -1.065z"/><circle cx="12" cy="12" r="3"/></g>
  <!-- chevrons -->
  <g stroke="#9ba1b8" stroke-width="2.2"><path d="M937 337.5 L943 344 L937 350.5 M937 410 L943 416.5 L937 423 M937 844.5 L943 851 L937 857.5 M937 1021.5 L943 1028 L937 1034.5"/></g>
  <path d="M937 555 L943.5 561.5 L937 568" stroke="#1b2030" stroke-width="2.6"/>
</svg>

<!-- project dropdown -->
<div class="a" style="left:152px;top:150px;width:391px;height:247px;border-radius:20px;background:rgba(215,25,59,0.33)"></div>
<div class="a" style="left:161.5px;top:157.7px;width:372.5px;height:231.3px;border-radius:15px;background:#d7193b"></div>
<div class="a" style="left:170.4px;top:166px;width:355.3px;height:214.8px;border-radius:9px;background:#fff;overflow:hidden">
  <div class="a" style="left:0;top:66.2px;width:356px;height:3.4px;background:#8db3e6"></div>
  <div class="a" style="left:0;top:69.6px;width:356px;height:75.4px;background:#d9d9e4"></div>
</div>
<svg style="left:0;top:0" width="560" height="400" fill="none" stroke-linecap="round" stroke-linejoin="round">
  <circle cx="202.5" cy="197" r="9.3" stroke="#151b26" stroke-width="2.6"/><path d="M209.5 204 L215 209.5" stroke="#151b26" stroke-width="2.8"/>
  <path d="M488 194 L493.3 188.5 L498.6 194 M488 203 L493.3 208.5 L498.6 203" stroke="#151b26" stroke-width="2.4"/>
  <path d="M194 259.6 H218.8 L216.2 285.4 H189.6 Z" fill="#0e2a23" stroke="none"/>
  <path d="M198.5 263.5 L203 263.5 L206 269.5 L211.5 263.5 L215.5 263.5 L208 272.5 L212 281.5 L207.5 281.5 L204.5 275.5 L199 281.5 L195 281.5 L202.5 272.5 Z" fill="#f2f4f3" stroke="none"/>
  <path d="M498 265.5 L505 272.5 L498 279.5" stroke="#1b2030" stroke-width="2.6"/>
  <path d="M207.8 338.5 V359.5 M197.3 349 H218.3" stroke="#151b26" stroke-width="3"/>
</svg>
<div class="t" style="left:231.3px;top:186.7px;font-size:26px;color:#151b26">edx.org</div>
<div class="t" style="left:234.7px;top:260.5px;font-size:26px;color:#343d6c">edx.org</div>
<div class="t" style="left:242px;top:337.4px;font-size:26px;color:#151b26">Créer un projet</div>

<!-- submenu -->
<div class="a" style="left:969px;top:509px;width:466px;height:252px;border-radius:20px;background:rgba(215,25,59,0.33)"></div>
<div class="a" style="left:977px;top:517px;width:450px;height:236px;border-radius:15px;background:#d7193b"></div>
<div class="a" style="left:985.5px;top:524.5px;width:433.5px;height:221.5px;border-radius:9px;background:#fff"></div>
<div class="t sm" style="top:551px">Classements</div>
<div class="t sm" style="top:624.8px">Concurrents</div>
<div class="t sm" style="top:699.4px">Sources</div>

<!-- AI row annotation -->
<div class="a" style="left:525px;top:517px;width:452px;height:84px;border:8px solid #d7193b;border-radius:15px;box-shadow:0 0 0 7px rgba(215,25,59,0.33)"></div>

<!-- badges -->
<svg style="left:0;top:0" width="1000" height="600">
  <g fill="rgba(215,25,59,0.22)">
    <rect x="150" y="95.5" width="72" height="72" rx="13"/>
    <rect x="545" y="156.5" width="72" height="72" rx="13"/>
    <rect x="903.5" y="433.5" width="73" height="72" rx="13"/>
  </g>
  <g fill="#d7193b">
    <rect x="155.2" y="100.8" width="61.4" height="61.2" rx="9"/>
    <path d="M156 124 L140 131.7 L156 139.5 Z"/>
    <rect x="550" y="162" width="61" height="61.6" rx="9"/>
    <path d="M551 185.5 L534.7 193 L551 200.5 Z"/>
    <rect x="909" y="439" width="62" height="61" rx="9"/>
    <path d="M933.3 499 L940 515.5 L946.7 499 Z"/>
  </g>
</svg>
<div class="t bn" style="left:155.2px;width:61.4px;top:117px">1</div>
<div class="t bn" style="left:550px;width:61px;top:178px">2</div>
<div class="t bn" style="left:909px;width:62px;top:455px">3</div>

</body></html>
